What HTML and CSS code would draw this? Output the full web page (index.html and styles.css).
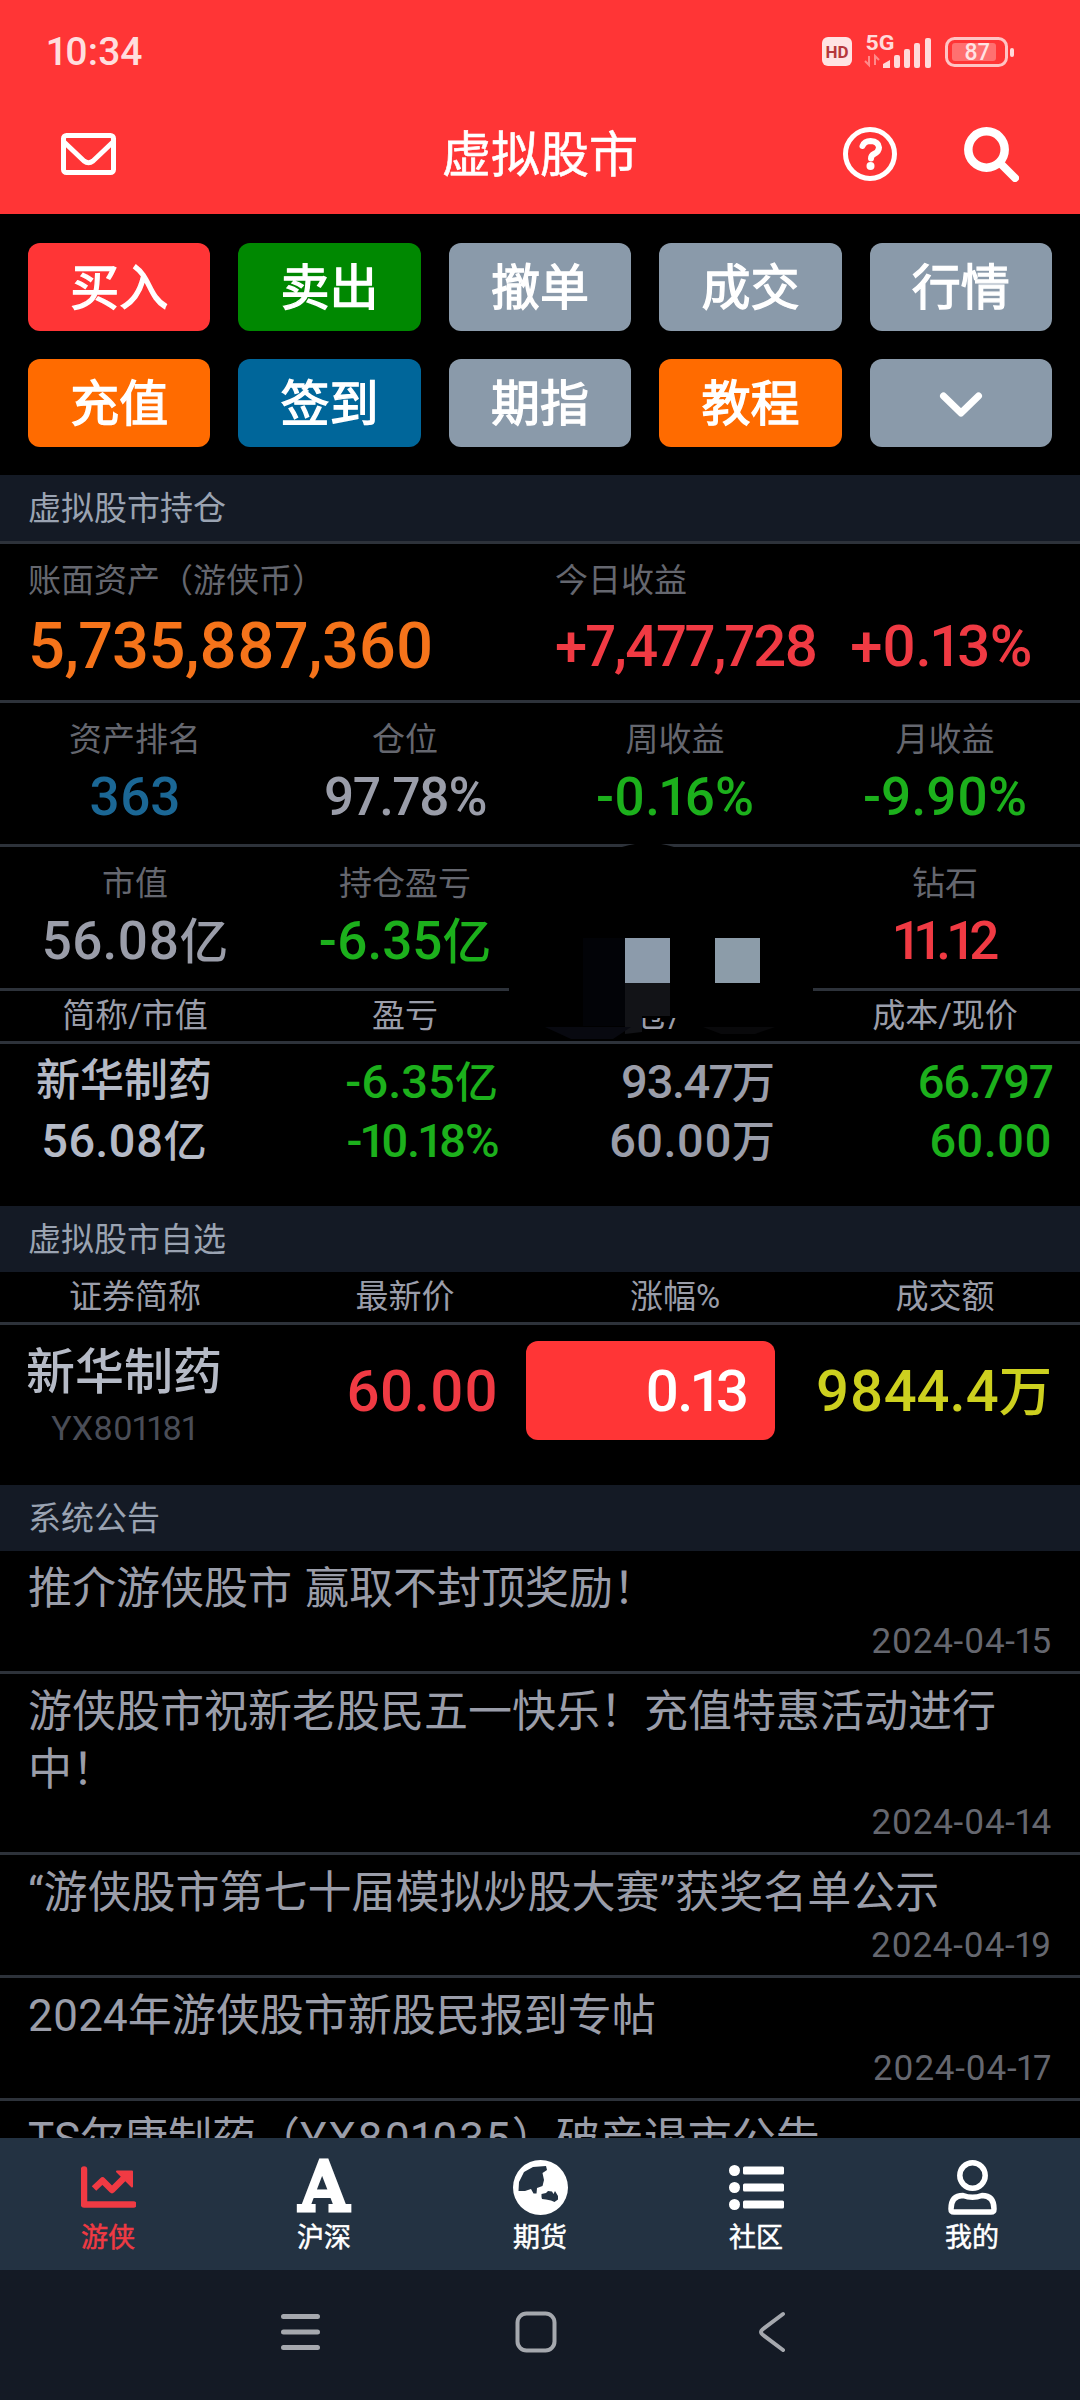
FILE: index.html
```html
<!DOCTYPE html>
<html lang="zh-CN">
<head>
    <meta charset="UTF-8">
    <meta name="viewport" content="width=device-width, initial-scale=1.0">
    <title>虚拟股市</title>
    <link rel="stylesheet" href="styles.css">
</head>
<body>
    <div class="app">
        <header class="header">
            <div class="status-bar">
                <span class="time">10:34</span>
                <svg class="status-icons" width="195" height="44" viewBox="0 -4 195 44">
                    <rect x="0" y="3" width="30" height="29" rx="6" fill="#ffe3e3"/>
                    <text x="15" y="24" text-anchor="middle" font-size="17" font-weight="700" fill="#b5383c">HD</text>
                    <text x="43.500" y="15.500" font-size="20" font-weight="700" fill="#ffdada" textLength="29" lengthAdjust="spacingAndGlyphs">5G</text>
                    <path d="M47 22v9l-4-4M53 31v-9l4 4" fill="none" stroke="#ff8a8a" stroke-width="2"/>
                    <g fill="#ffdada">
                        <path d="M61 34v-4l7-4v8z"/>
                        <rect x="72" y="21" width="6" height="13" rx="2"/>
                        <rect x="82" y="15" width="6" height="19" rx="2"/>
                        <rect x="92" y="9" width="6" height="25" rx="2"/>
                        <rect x="103" y="4" width="6" height="30" rx="2"/>
                        <rect x="188" y="14" width="4" height="9" rx="2"/>
                    </g>
                    <rect x="124.500" y="4.500" width="60" height="27" rx="8" fill="none" stroke="#ffc4c4" stroke-width="3"/>
                    <rect x="130" y="9" width="44" height="18" rx="3" fill="#ff7070"/>
                    <text x="155" y="25.500" text-anchor="middle" font-size="23" font-weight="500" fill="#ffe3e3">87</text>
                </svg>
            </div>
            <div class="title-bar">
                <div class="title-left">
                    <svg width="55" height="42" viewBox="0 0 55 42" fill="none" stroke="#fff" stroke-width="5" stroke-linejoin="round" stroke-linecap="round">
                        <rect x="2.500" y="2.500" width="50" height="37" rx="3"/>
                        <path d="M3 9l20 19q4.500 3.500 9 0L52 9"/>
                    </svg>
                </div>
                <h1>虚拟股市</h1>
                <div class="title-right">
                    <svg width="54" height="54" viewBox="0 0 54 54" fill="none" stroke="#fff">
                        <circle cx="27" cy="27" r="24.500" stroke-width="5"/>
                        <path d="M19.500 19q2-5 8-5 8 .5 8.500 6.500 0 4-5 6.500-3 1.500-3 4.500" stroke-width="6" stroke-linecap="round"/>
                        <circle cx="27.500" cy="39" r="4" fill="#fff" stroke="none"/>
                    </svg>
                    <svg width="55" height="55" viewBox="0 0 55 55" fill="none" stroke="#fff">
                        <circle cx="22.500" cy="22.500" r="18.200" stroke-width="8.500"/>
                        <path d="M37 37L51 51" stroke-width="8" stroke-linecap="round"/>
                    </svg>
                </div>
            </div>
        </header>

        <main class="content">
            <div class="buttons">
                <button class="btn red">买入</button>
                <button class="btn green">卖出</button>
                <button class="btn">撤单</button>
                <button class="btn">成交</button>
                <button class="btn">行情</button>
                <button class="btn orange">充值</button>
                <button class="btn blue">签到</button>
                <button class="btn">期指</button>
                <button class="btn orange">教程</button>
                <button class="btn">
                    <svg width="44" height="28" viewBox="0 0 44 28" fill="none" stroke="#fff" stroke-width="7" stroke-linecap="round" stroke-linejoin="round">
                        <path d="M4.500 5L22 22 39.500 5"/>
                    </svg>
                </button>
            </div>

            <h2 class="section line">虚拟股市持仓</h2>
            <div class="assets line">
                <div>
                    <div class="label">账面资产（游侠币）</div>
                    <div class="total">5,735,887,360</div>
                </div>
                <div>
                    <div class="label">今日收益</div>
                    <div class="today"><span class="profit">+7,477,728</span><span class="rate">+0.13%</span></div>
                </div>
            </div>

            <div class="masked">
                <div class="stats line">
                    <div><div class="label">资产排名</div><div class="value c-blue">363</div></div>
                    <div><div class="label">仓位</div><div class="value tight">97.78%</div></div>
                    <div><div class="label">周收益</div><div class="value c-green">-0.16%</div></div>
                    <div><div class="label">月收益</div><div class="value c-green">-9.90%</div></div>
                </div>
                <div class="stats line">
                    <div><div class="label">市值</div><div class="value">56.08<small>亿</small></div></div>
                    <div><div class="label">持仓盈亏</div><div class="value c-green">-6.35<small>亿</small></div></div>
                    <div></div>
                    <div><div class="label">钻石</div><div class="value c-red ones">11.12</div></div>
                </div>
                <div class="table-head line">
                    <span>简称/市值</span>
                    <span>盈亏</span>
                    <span>持仓/可用</span>
                    <span>成本/现价</span>
                </div>
                <!-- painted-over area -->
                <svg class="mask" width="304" height="198" viewBox="0 0 304 198">
                    <path fill="#000" d="M0 5H113Q139 -3 165 5H304V198H0zM133 176v14h33l4-14h-10l-3 4h-3l-2-4z" fill-rule="evenodd"/>
                    <rect x="74" y="96" width="42" height="88" fill="#020307"/>
                    <rect x="116" y="96" width="45" height="45" fill="#8c9bab"/>
                    <rect x="206" y="96" width="45" height="45" fill="#8c9ca9"/>
                    <path d="M116 141h45v33h-28v16l-17 2z" fill="#121317"/>
                    <path d="M36 185h86l-18 12H62z" fill="#080910"/>
                    <path d="M194 185h72l-20 7h-34z" fill="#09090b"/>
                </svg>
            </div>

            <div class="holding">
                <div class="name">新华制药<br><span class="num">56.08<small>亿</small></span></div>
                <div class="c-green">-6.35<small>亿</small><br><span class="tight">-10.18%</span></div>
                <div class="c-gray"><span class="tight">93.47</span><small>万</small><br>60.00<small>万</small></div>
                <div class="c-green"><span class="tight">66.797</span><br>60.00</div>
            </div>

            <h2 class="section">虚拟股市自选</h2>
            <div class="table-head line">
                <span>证券简称</span>
                <span>最新价</span>
                <span>涨幅%</span>
                <span>成交额</span>
            </div>
            <div class="watch">
                <div class="stock">
                    <div class="stock-name">新华制药</div>
                    <div class="stock-code">YX801181</div>
                </div>
                <div class="c-red">60.00</div>
                <div class="pill">0.13</div>
                <div class="c-yellow">9844.4<small>万</small></div>
            </div>

            <h2 class="section">系统公告</h2>
            <div class="notice line">
                <p>推介游侠股市 赢取不封顶奖励！</p>
                <time>2024-04-15</time>
            </div>
            <div class="notice line">
                <p>游侠股市祝新老股民五一快乐！充值特惠活动进行中！</p>
                <time>2024-04-14</time>
            </div>
            <div class="notice line">
                <p>“游侠股市第七十届模拟炒股大赛”获奖名单公示</p>
                <time>2024-04-19</time>
            </div>
            <div class="notice line">
                <p>2024年游侠股市新股民报到专帖</p>
                <time>2024-04-17</time>
            </div>
            <div class="notice">
                <p>TS尔康制药（<span class="code">YX801035</span>）破产退市公告</p>
            </div>
        </main>

        <nav class="tabs">
            <a class="tab active">
                <svg width="55" height="55" viewBox="0 0 55 55" fill="none" stroke="currentColor" stroke-linejoin="round">
                    <path d="M3 9.500V44.500H52.500" stroke-width="6.500" stroke-linecap="round"/>
                    <path d="M13 28.500l8.500-8L31 30 44 17" stroke-width="6.500"/>
                    <path d="M36 11.500h15v15z" fill="currentColor" stroke-width="2"/>
                </svg>
                <span>游侠</span>
            </a>
            <a class="tab">
                <i class="letter">A</i>
                <span>沪深</span>
            </a>
            <a class="tab">
                <svg width="55" height="55" viewBox="0 0 55 55">
                    <circle cx="27.500" cy="27.500" r="27.500" fill="#fff"/>
                    <path d="M5.500 31L6 22 11 12 20 7 33 6 34 10 29.500 13 31 20 29.500 26 24 28 23.500 33.500 20.500 33.500 18 29 12 31z" fill="#233242"/>
                    <path d="M28.500 37V34L33 33 35 31 39 31.500 40.500 34 42 31 45 36V39.500L41.500 42 38 40.500 33 39.500 29 39z" fill="#233242"/>
                </svg>
                <span>期货</span>
            </a>
            <a class="tab">
                <svg width="55" height="55" viewBox="0 0 55 55" fill="#fff">
                    <circle cx="5.500" cy="10.500" r="5.500"/>
                    <circle cx="5.500" cy="27.500" r="5.500"/>
                    <circle cx="5.500" cy="44.500" r="5.500"/>
                    <rect x="14" y="6.500" width="41" height="8" rx="1.500"/>
                    <rect x="14" y="23.500" width="41" height="8" rx="1.500"/>
                    <rect x="14" y="40.500" width="41" height="8" rx="1.500"/>
                </svg>
                <span>社区</span>
            </a>
            <a class="tab">
                <svg width="55" height="55" viewBox="0 0 55 55" fill="none" stroke="#fff" stroke-width="5.500" stroke-linejoin="round">
                    <circle cx="27.500" cy="15.500" r="12.700"/>
                    <path d="M18 35.500q9.500 3.500 19 0 12 0 12 13.500 0 3-3 3H9q-3 0-3-3 0-13.500 12-13.500z"/>
                </svg>
                <span>我的</span>
            </a>
        </nav>

        <div class="system-nav">
            <svg width="42" height="42" viewBox="0 0 42 42" fill="none" stroke="#a5a8ae" stroke-width="5" stroke-linecap="round">
                <path d="M4.500 5.500h34M4.500 21h34M4.500 36.500h34"/>
            </svg>
            <svg width="42" height="42" viewBox="0 0 42 42" fill="none" stroke="#a5a8ae" stroke-width="4">
                <rect x="2.500" y="2.500" width="37" height="37" rx="9"/>
            </svg>
            <svg width="42" height="42" viewBox="0 0 42 42" fill="none" stroke="#a5a8ae" stroke-width="4" stroke-linecap="round" stroke-linejoin="round">
                <path d="M32 3L11.500 18.500q-3 2.500 0 5L32 39"/>
            </svg>
        </div>
    </div>
</body>
</html>
```

FILE: styles.css
```css
* {
    box-sizing: border-box;
    margin: 0;
    padding: 0;
}

body {
    background-color: #000;
    color: #9a9da9;
    font-family: Roboto, "Noto Sans CJK SC", sans-serif;
    font-variant-numeric: proportional-nums;
}

svg {
    display: block;
}

.app {
    width: 1080px;
    height: 2400px;
    display: flex;
    flex-direction: column;
    overflow: hidden;
}

/* header */
.header {
    height: 214px;
    background-color: #ff3536;
    color: #fff;
}

.status-bar {
    height: 94px;
    padding: 9px 63px 0 47px;
    display: flex;
    align-items: center;
    justify-content: space-between;
}

.time {
    font-size: 39px;
    font-weight: 500;
    color: #ffdede;
}

.title-bar {
    height: 120px;
    padding: 0 61px;
    display: grid;
    grid-template-columns: 1fr auto 1fr;
    align-items: center;
}

h1 {
    padding-top: 3px;
    font-size: 49px;
    line-height: 72px;
    font-weight: 400;
    -webkit-text-stroke: 0.6px;
}

.title-right {
    display: flex;
    justify-content: flex-end;
    gap: 67px;
}

/* body */
.content {
    flex: 1;
    min-height: 0;
    overflow: hidden;
}

.line {
    border-bottom: 3px solid #2d323a;
}

.buttons {
    display: grid;
    grid-template-columns: repeat(5, 1fr);
    gap: 28px;
    padding: 29px 28px 28px;
}

.btn {
    height: 88px;
    padding-top: 3px;
    border: none;
    border-radius: 12px;
    background-color: #8a9aaa;
    color: #fff;
    font-family: inherit;
    font-size: 49px;
    line-height: 72px;
    font-weight: 400;
    -webkit-text-stroke: 1.3px;
    display: flex;
    align-items: center;
    justify-content: center;
}

.red {
    background-color: #ff3536;
}

.green {
    background-color: #008801;
}

.orange {
    background-color: #ff6b00;
}

.blue {
    background-color: #00669a;
}

.section {
    padding: 1px 0 0 28px;
    background-color: #141a25;
    color: #9aa3b2;
    font-size: 33px;
    font-weight: 400;
    line-height: 65px;
}

.label {
    color: #65676f;
    font-size: 33px;
    line-height: 44px;
}

.assets {
    height: 159px;
    padding: 15px 28px 0;
    display: grid;
    grid-template-columns: 527px 1fr;
}

.total,
.today {
    line-height: 86px;
    font-weight: 500;
}

.total {
    color: #f5731a;
    font-size: 65px;
    letter-spacing: -0.5px;
}

.today {
    display: flex;
    justify-content: space-between;
    color: #f03a43;
    font-size: 58px;
    white-space: nowrap;
}

.profit {
    letter-spacing: -1.8px;
}

.rate {
    padding-right: 20px;
    letter-spacing: -0.5px;
}

.masked {
    position: relative;
}

.mask {
    position: absolute;
    left: 509px;
    top: 139px;
}

.stats {
    height: 144px;
    padding-top: 15px;
    display: grid;
    grid-template-columns: repeat(4, 1fr);
    text-align: center;
}

.value {
    font-size: 53px;
    font-weight: 500;
    line-height: 70px;
}

small {
    font-size: 0.92em;
    line-height: 1;
}

.tight {
    letter-spacing: -1.5px;
}

.ones {
    letter-spacing: -3px;
}

.c-blue {
    color: #1b6795;
}

.c-green {
    color: #1cb01c;
}

.c-red {
    color: #f03a43;
}

.c-gray {
    color: #9a9da9;
}

.c-yellow {
    color: #cdd01f;
}

.table-head {
    display: grid;
    grid-template-columns: repeat(4, 1fr);
    text-align: center;
    font-size: 33px;
    line-height: 50px;
}

.holding,
.watch {
    display: grid;
    grid-template-columns: 248px 250px 277px 277px;
    text-align: right;
    font-weight: 500;
}

.holding {
    height: 162px;
    padding-top: 8px;
    font-size: 47px;
    line-height: 59px;
}

.name {
    text-align: center;
    color: #b5bac6;
    font-size: 44px;
}

.num {
    font-size: 47px;
}

.watch {
    height: 160px;
    padding-top: 16px;
    font-size: 58px;
    line-height: 101px;
}

.stock {
    text-align: center;
}

.stock-name {
    padding-top: 2px;
    color: #b5bac6;
    font-size: 49px;
    line-height: 60px;
}

.stock-code {
    color: #4a4d57;
    font-size: 34px;
    font-weight: 400;
    line-height: 50px;
}

.pill {
    height: 99px;
    margin-left: 28px;
    padding-right: 28px;
    border-radius: 12px;
    background-color: #ff3536;
    color: #fff;
    letter-spacing: -2px;
}

.notice {
    padding: 9px 28px 6px;
}

.notice p {
    font-size: 44px;
    line-height: 58px;
    word-spacing: 2px;
}

.notice time {
    display: block;
    color: #65676f;
    font-size: 35px;
    line-height: 47px;
    letter-spacing: 0.7px;
    text-align: right;
}

.code {
    letter-spacing: 1.5px;
}

/* bottom tabs */
.tabs {
    height: 132px;
    padding-top: 22px;
    background-color: #233242;
    display: grid;
    grid-template-columns: repeat(5, 1fr);
}

.tab {
    display: flex;
    flex-direction: column;
    align-items: center;
    color: #fff;
    font-size: 27px;
    line-height: 38px;
}

.tab span {
    margin-top: 4px;
    -webkit-text-stroke: 0.5px;
}

.letter {
    height: 55px;
    font-family: "DejaVu Serif", serif;
    font-size: 67px;
    font-style: normal;
    line-height: 54px;
    -webkit-text-stroke: 5px;
}

.active {
    color: #f03a43;
}

.system-nav {
    height: 130px;
    padding: 0 8px 6px 0;
    background-color: #141a25;
    display: flex;
    align-items: center;
    justify-content: center;
    gap: 194px;
}
```
